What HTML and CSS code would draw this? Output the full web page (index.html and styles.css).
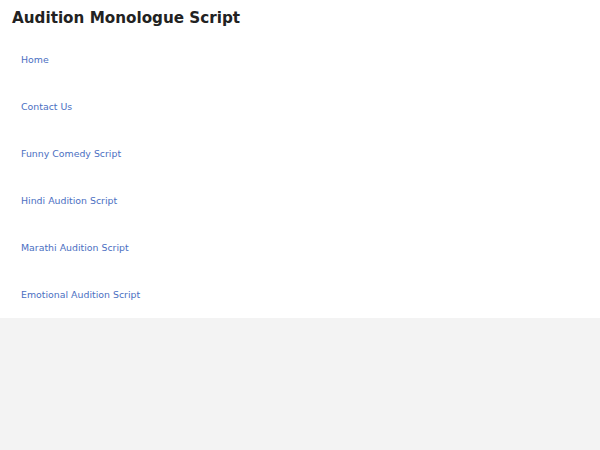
FILE: index.html
```html
<!DOCTYPE html>
<html>
<head>
<meta charset="utf-8">
<link rel="stylesheet" href="styles.css">
</head>
<body>
<div class="site">
  <header class="header">
    <p class="title">Audition Monologue Script</p>
  </header>
  <nav class="nav">
    <a class="nav-link" href="#">Home</a>
    <a class="nav-link" href="#">Contact Us</a>
    <a class="nav-link" href="#">Funny Comedy Script</a>
    <a class="nav-link" href="#">Hindi Audition Script</a>
    <a class="nav-link" href="#">Marathi Audition Script</a>
    <a class="nav-link" href="#">Emotional Audition Script</a>
  </nav>
</div>
</body>
</html>
```
FILE: styles.css
```css
html, body {
  margin: 0;
  padding: 0;
  background: #f3f3f3;
  font-family: "DejaVu Sans", sans-serif;
}
.site {
  background: #ffffff;
}
.header {
  height: 36px;
  display: flex;
  align-items: center;
  padding: 0 12px;
}
.title {
  margin: 0;
  font-size: 15.2px;
  font-weight: bold;
  color: #222222;
}
.nav {
  display: flex;
  flex-direction: column;
}
.nav-link {
  display: block;
  height: 47px;
  line-height: 47px;
  padding: 0 21px;
  font-size: 9.4px;
  color: #4b6fc2;
  text-decoration: none;
}
```
